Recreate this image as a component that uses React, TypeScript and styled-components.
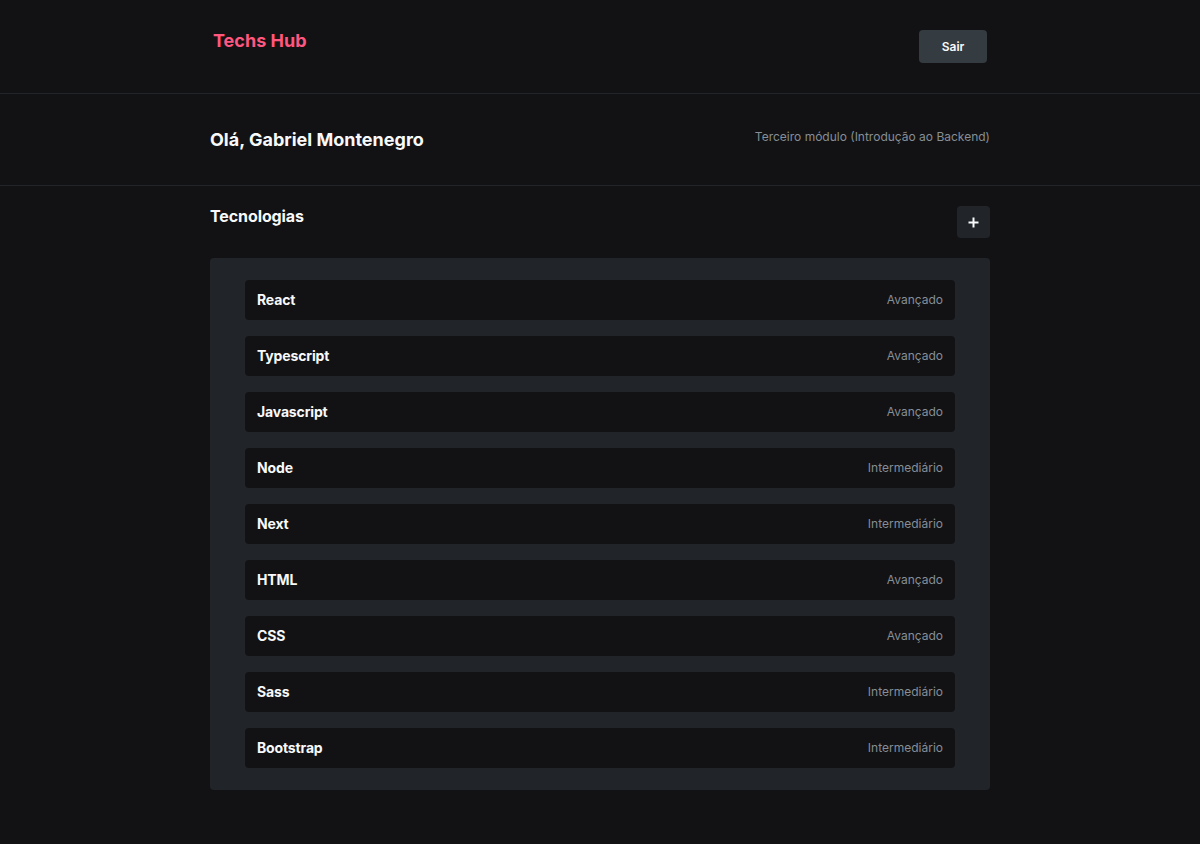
import styled, { createGlobalStyle } from "styled-components";

const techs = [
  { title: "React", status: "Avançado" },
  { title: "Typescript", status: "Avançado" },
  { title: "Javascript", status: "Avançado" },
  { title: "Node", status: "Intermediário" },
  { title: "Next", status: "Intermediário" },
  { title: "HTML", status: "Avançado" },
  { title: "CSS", status: "Avançado" },
  { title: "Sass", status: "Intermediário" },
  { title: "Bootstrap", status: "Intermediário" },
];

const App = () => {
  return (
    <>
      <GlobalStyle />
      <Header>
        <HeaderInner>
          <Logo>Techs Hub</Logo>
          <LogoutButton>Sair</LogoutButton>
        </HeaderInner>
      </Header>
      <Section>
        <Row>
          <Greeting>Olá, Gabriel Montenegro</Greeting>
          <Module>Terceiro módulo (Introdução ao Backend)</Module>
        </Row>
      </Section>
      <Main>
        <TitleRow>
          <Title>Tecnologias</Title>
          <AddButton aria-label="Adicionar">
            <svg width="11" height="11" viewBox="0 0 11 11">
              <path d="M5.5 0.5v10M0.5 5.5h10" stroke="#F8F9FA" strokeWidth="2" />
            </svg>
          </AddButton>
        </TitleRow>
        <List>
          {techs.map((t) => (
            <Item key={t.title}>
              <ItemTitle>{t.title}</ItemTitle>
              <ItemStatus>{t.status}</ItemStatus>
            </Item>
          ))}
        </List>
      </Main>
    </>
  );
};

export default App;

const GlobalStyle = createGlobalStyle`
  * {
    box-sizing: border-box;
  }
  body {
    margin: 0;
    background-color: #121214;
    font-family: Inter, "Noto Sans", sans-serif;
    color: #f8f9fa;
  }
`;

const Header = styled.header`
  height: 94px;
  border-bottom: 1px solid #212529;
`;

const HeaderInner = styled.div`
  width: 774px;
  margin: 0 auto;
  padding-top: 30px;
  display: flex;
  justify-content: space-between;
  align-items: flex-start;
`;

const Logo = styled.h1`
  margin: 0;
  font-size: 18px;
  line-height: 22px;
  font-weight: 700;
  color: #ff577f;
`;

const LogoutButton = styled.button`
  width: 68px;
  height: 33px;
  border: none;
  border-radius: 4px;
  background-color: #343b41;
  color: #f8f9fa;
  font-family: Inter, sans-serif;
  font-size: 12px;
  font-weight: 600;
  cursor: pointer;
`;

const Section = styled.section`
  height: 92px;
  border-bottom: 1px solid #212529;
  display: flex;
  align-items: center;
`;

const Row = styled.div`
  width: 780px;
  margin: 0 auto;
  display: flex;
  justify-content: space-between;
  align-items: center;
`;

const Greeting = styled.h2`
  margin: 0;
  font-size: 18px;
  line-height: 22px;
  font-weight: 700;
`;

const Module = styled.span`
  font-size: 12px;
  color: #868e96;
  margin-bottom: 6px;
`;

const Main = styled.main`
  width: 780px;
  margin: 0 auto;
  padding-top: 20px;
`;

const TitleRow = styled.div`
  display: flex;
  justify-content: space-between;
  align-items: flex-start;
  margin-bottom: 20px;
`;

const Title = styled.h3`
  margin: 0;
  padding-top: 1px;
  font-size: 16px;
  line-height: 19px;
  font-weight: 700;
  letter-spacing: -0.1px;
`;

const AddButton = styled.button`
  width: 33px;
  height: 32px;
  border: none;
  border-radius: 4px;
  background-color: #212529;
  display: flex;
  justify-content: center;
  align-items: center;
  cursor: pointer;
`;

const List = styled.ul`
  margin: 0;
  padding: 22px 35px;
  list-style: none;
  background-color: #212529;
  border-radius: 4px;
  display: flex;
  flex-direction: column;
  gap: 16px;
`;

const Item = styled.li`
  height: 40px;
  padding: 0 12px 2px;
  background-color: #121214;
  border-radius: 4px;
  display: flex;
  justify-content: space-between;
  align-items: center;
`;

const ItemTitle = styled.span`
  font-size: 14px;
  font-weight: 700;
  letter-spacing: -0.15px;
`;

const ItemStatus = styled.span`
  font-size: 12px;
  color: #868e96;
`;
